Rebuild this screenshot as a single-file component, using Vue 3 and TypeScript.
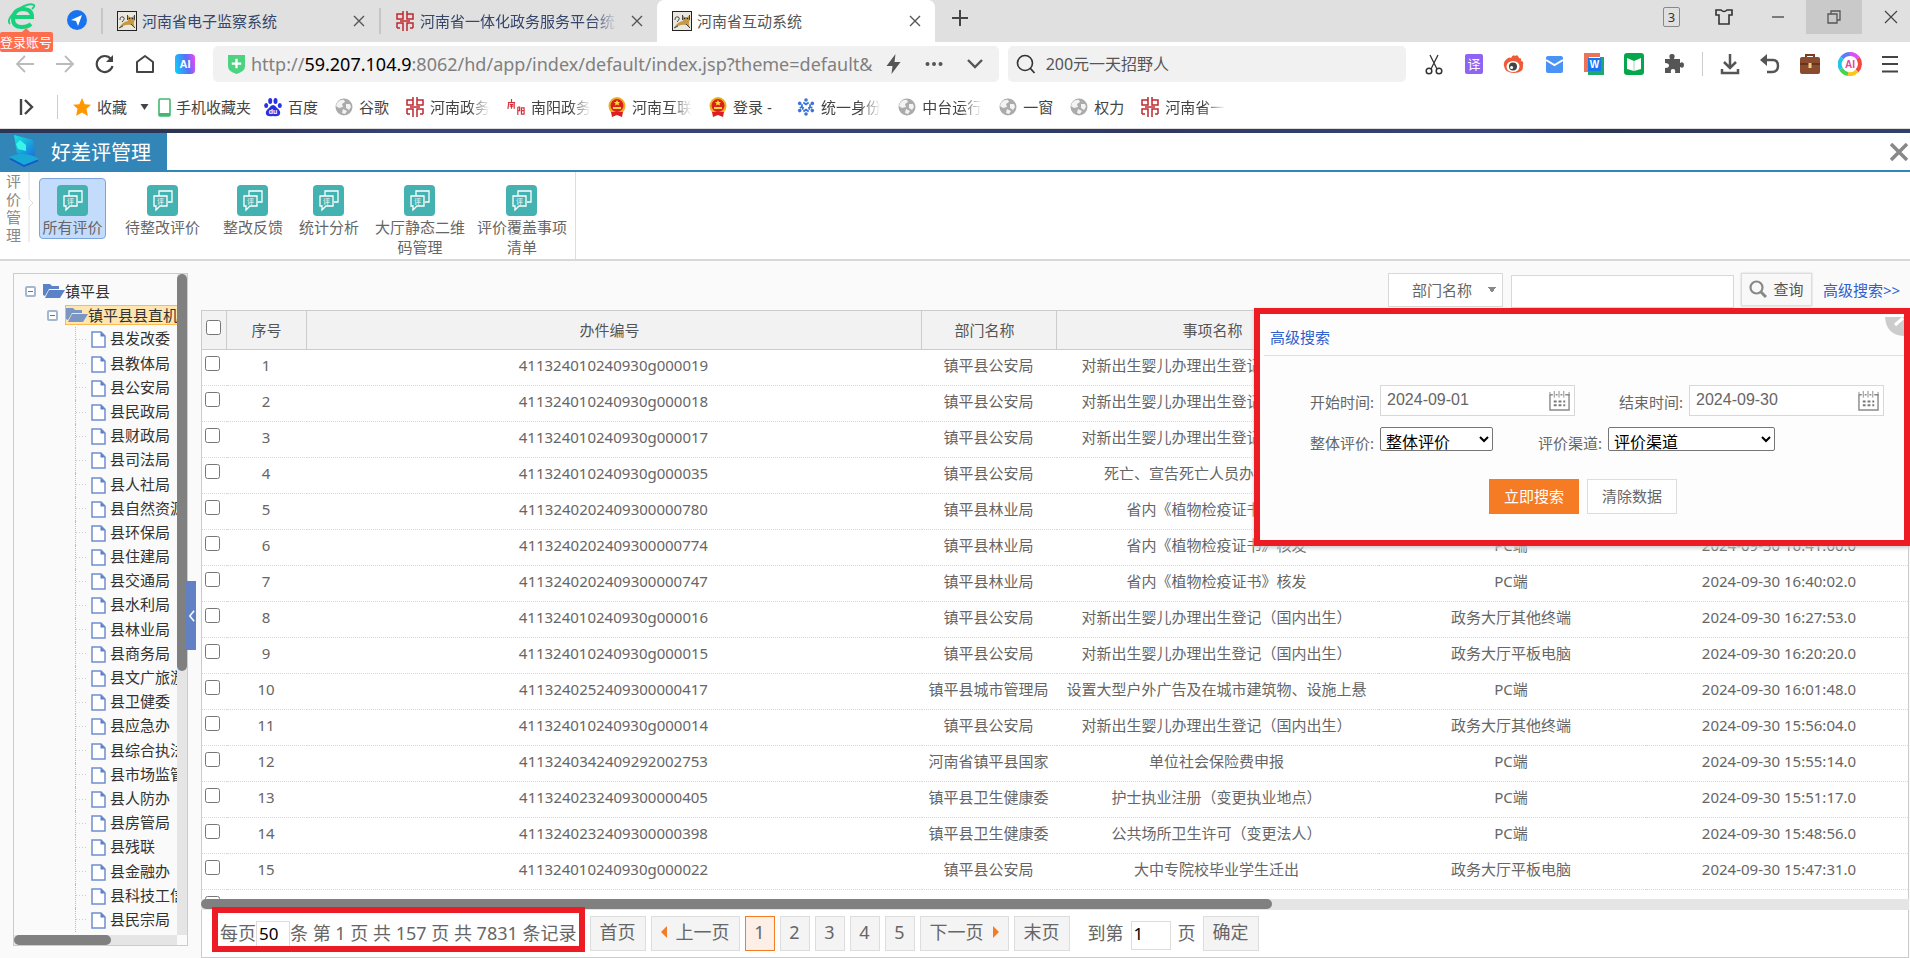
<script setup lang="ts">
import { ref } from 'vue'

interface Row {
  code: string
  dept: string
  item: string
  channel: string
  time: string
}

const bookmarks: { icon: string; label: string; fade?: boolean; wide?: boolean }[] = [
  { icon: 'baidu', label: '百度' },
  { icon: 'globe', label: '谷歌' },
  { icon: 'seal', label: '河南政务', fade: true },
  { icon: 'nanyang', label: '南阳政务', fade: true },
  { icon: 'emblem', label: '河南互联', fade: true },
  { icon: 'emblem', label: '登录 -', wide: true },
  { icon: 'flower', label: '统一身份', fade: true },
  { icon: 'globe', label: '中台运行', fade: true },
  { icon: 'globe', label: '一窗' },
  { icon: 'globe', label: '权力' },
  { icon: 'seal', label: '河南省一', fade: true },
]

const tools = ['scissors', 'translate', 'weibo', 'mail', 'word', 'book', 'puzzle']
const tools2 = ['download', 'undo', 'case', 'aiRing', 'menu']

const ribbon = [
  { lines: ['所有评价'] },
  { lines: ['待整改评价'] },
  { lines: ['整改反馈'] },
  { lines: ['统计分析'] },
  { lines: ['大厅静态二维', '码管理'] },
  { lines: ['评价覆盖事项', '清单'] },
]

const departments = [
  '县发改委', '县教体局', '县公安局', '县民政局', '县财政局', '县司法局', '县人社局',
  '县自然资源', '县环保局', '县住建局', '县交通局', '县水利局', '县林业局', '县商务局',
  '县文广旅游', '县卫健委', '县应急办', '县综合执法', '县市场监管', '县人防办', '县房管局',
  '县残联', '县金融办', '县科技工信', '县民宗局',
]

const birth = '对新出生婴儿办理出生登记（国内出生）'
const plant = '省内《植物检疫证书》核发'
const rows: Row[] = [
  { code: '411324010240930g000019', dept: '镇平县公安局', item: birth, channel: '', time: '' },
  { code: '411324010240930g000018', dept: '镇平县公安局', item: birth, channel: '', time: '' },
  { code: '411324010240930g000017', dept: '镇平县公安局', item: birth, channel: '', time: '' },
  { code: '411324010240930g000035', dept: '镇平县公安局', item: '死亡、宣告死亡人员办理户口注销', channel: '', time: '' },
  { code: '4113240202409300000780', dept: '镇平县林业局', item: plant, channel: '', time: '' },
  { code: '4113240202409300000774', dept: '镇平县林业局', item: plant, channel: 'PC端', time: '2024-09-30 16:41:00.0' },
  { code: '4113240202409300000747', dept: '镇平县林业局', item: plant, channel: 'PC端', time: '2024-09-30 16:40:02.0' },
  { code: '411324010240930g000016', dept: '镇平县公安局', item: birth, channel: '政务大厅其他终端', time: '2024-09-30 16:27:53.0' },
  { code: '411324010240930g000015', dept: '镇平县公安局', item: birth, channel: '政务大厅平板电脑', time: '2024-09-30 16:20:20.0' },
  { code: '4113240252409300000417', dept: '镇平县城市管理局', item: '设置大型户外广告及在城市建筑物、设施上悬', channel: 'PC端', time: '2024-09-30 16:01:48.0' },
  { code: '411324010240930g000014', dept: '镇平县公安局', item: birth, channel: '政务大厅其他终端', time: '2024-09-30 15:56:04.0' },
  { code: '4113240342409292002753', dept: '河南省镇平县国家', item: '单位社会保险费申报', channel: 'PC端', time: '2024-09-30 15:55:14.0' },
  { code: '4113240232409300000405', dept: '镇平县卫生健康委', item: '护士执业注册（变更执业地点）', channel: 'PC端', time: '2024-09-30 15:51:17.0' },
  { code: '4113240232409300000398', dept: '镇平县卫生健康委', item: '公共场所卫生许可（变更法人）', channel: 'PC端', time: '2024-09-30 15:48:56.0' },
  { code: '411324010240930g000022', dept: '镇平县公安局', item: '大中专院校毕业学生迁出', channel: '政务大厅平板电脑', time: '2024-09-30 15:47:31.0' },
]

const activeRibbon = ref(0)
const page = ref(1)
const pageSize = ref('50')
const gotoPage = ref('1')
const keyword = ref('')
const webSearch = ref('200元一天招野人')
const startDate = ref('2024-09-01')
const endDate = ref('2024-09-30')

function clearForm() {
  startDate.value = ''
  endDate.value = ''
}
</script>

<template>
  <svg class="defs" width="0" height="0" aria-hidden="true">
    <symbol id="i-x" viewBox="0 0 14 14"><path d="M2 2L12 12M12 2L2 12" stroke="currentColor" stroke-width="1.4" fill="none" /></symbol>
    <symbol id="i-tomcat" viewBox="0 0 20 20">
      <rect x="0.5" y="0.5" width="19" height="19" fill="#e9e7df" stroke="#222" />
      <path d="M2 17Q5 11 11 10L10.500 4L12.500 6H15.500L17.500 4V10Q16 12 18 17L14.500 14Q10 13 6 15Z" fill="#c49a45" />
      <path d="M2 17L6 15M10.500 4V9M17.500 4V9M14 13L18 17M3 9Q3 5 6 6T5 11" stroke="#444" fill="none" />
      <circle cx="12.500" cy="7.500" r="0.800" fill="#222" /><circle cx="15.500" cy="7.500" r="0.800" fill="#222" />
    </symbol>
    <symbol id="i-seal" viewBox="0 0 18 20">
      <path d="M7 0V8H1V3H7M11 0V8H17V3H11M1 17V12H7V20M17 17V12H11V20M1 17H4M17 17H14M4 10H14" stroke="#c0272d" stroke-width="1.500" fill="none" />
    </symbol>
    <symbol id="i-globe" viewBox="0 0 18 18">
      <circle cx="9" cy="9" r="8.5" fill="#ababab" />
      <path d="M2 5Q5 1 9 2L10 4L7 6L8 9L4 10L1 8ZM11 6L15 6L16 9L14 12L11 10ZM8 11L12 13L10 16L7 15Z" fill="#f3f3f3" />
    </symbol>
    <symbol id="i-baidu" viewBox="0 0 18 20">
      <g fill="#2932e1"><ellipse cx="6.2" cy="4" rx="2" ry="3" /><ellipse cx="11.5" cy="4" rx="2" ry="3" /><ellipse cx="2.2" cy="8.5" rx="2" ry="2.6" /><ellipse cx="15.8" cy="8.5" rx="2" ry="2.6" /><path d="M9 8Q11 8 13 11Q17 14 16 17Q15 20 9 19Q3 20 2 17Q1 14 5 11Q7 8 9 8Z" /></g>
      <text x="9" y="17" font-size="7" font-weight="700" fill="#fff" text-anchor="middle" font-family="Liberation Sans, sans-serif">du</text>
    </symbol>
    <symbol id="i-nanyang" viewBox="0 0 20 18">
      <path d="M5 0V4M1 4H9M2 4L1 11M8 4V11M3 6H7M3 8H7M5 6V11" stroke="#d6303a" stroke-width="1.300" fill="none" />
      <path d="M12 9V18M12 9H14V13H12M16 10H19V17H16ZM16 13H19" stroke="#d6303a" stroke-width="1.300" fill="none" />
    </symbol>
    <symbol id="i-emblem" viewBox="0 0 18 20">
      <ellipse cx="9" cy="9" rx="8.500" ry="9" fill="#ecae26" /><circle cx="9" cy="8.500" r="6.500" fill="#dc1f1c" />
      <path d="M9 3L10 5H12L10.500 6.500L11 8.500L9 7.400L7 8.500L7.500 6.500L6 5H8ZM5 10H13V12H5Z" fill="#ffd83c" />
      <path d="M3 15H15L14 20L9 18L4 20Z" fill="#dc1f1c" />
    </symbol>
    <symbol id="i-flower" viewBox="0 0 20 20">
      <g fill="#3b74d6"><circle cx="10" cy="2.200" r="2" /><circle cx="17" cy="6" r="2" /><circle cx="17" cy="14" r="2" /><circle cx="10" cy="17.800" r="2" /><circle cx="3" cy="14" r="2" /><circle cx="3" cy="6" r="2" /></g>
      <path d="M7 5L10 7L13 5M14.500 7V10L17 11M13 15L10 13L7 15M5.500 7V10L3 11M6 13L7 10M14 13L13 10" stroke="#3b74d6" stroke-width="2" fill="none" />
    </symbol>
    <symbol id="i-scissors" viewBox="0 0 24 24"><path d="M8 3L15 17M16 3L9 17" stroke="#333" stroke-width="1.300" /><circle cx="7" cy="19" r="2.800" fill="none" stroke="#333" stroke-width="1.500" /><circle cx="17" cy="19" r="2.800" fill="none" stroke="#333" stroke-width="1.500" /></symbol>
    <symbol id="i-translate" viewBox="0 0 24 24"><rect x="3" y="2" width="18" height="20" rx="2" fill="#8f63f4" /><text x="12" y="17" font-size="13" fill="#fff" text-anchor="middle" font-family="Noto Sans CJK SC, sans-serif">译</text></symbol>
    <symbol id="i-weibo" viewBox="0 0 24 24"><path d="M2 14Q1 9 6 6Q8 5 9 6Q11 2 13 4Q16 2 17 6Q20 6 19 9Q22 9 21 13Q22 21 12 21Q3 21 2 14Z" fill="#f15a38" /><ellipse cx="11" cy="14.500" rx="6.500" ry="5.500" fill="#fff" /><circle cx="11" cy="14.500" r="4" fill="#444" /><circle cx="9.600" cy="15.500" r="1.500" fill="#fff" /></symbol>
    <symbol id="i-mail" viewBox="0 0 24 24"><rect x="4" y="4" width="17" height="17" rx="2" fill="#4b92f5" /><path d="M4 8L12.500 13L21 8" stroke="#fff" stroke-width="2" fill="none" /></symbol>
    <symbol id="i-word" viewBox="0 0 24 24"><path d="M2 1H18V5H7V20H2Z" fill="#ee7355" /><path d="M18 5H22V23H6V19H18Z" fill="#1ea86a" /><rect x="6" y="6" width="13" height="13" fill="#1677f2" /><text x="12.500" y="16" font-size="10" font-weight="700" fill="#fff" text-anchor="middle" font-family="Liberation Sans, sans-serif">W</text></symbol>
    <symbol id="i-book" viewBox="0 0 24 24"><rect x="2" y="1" width="20" height="22" rx="3" fill="#06a64c" /><path d="M5 6L12 9L19 6V17L12 19L5 17Z" fill="#fff" /><path d="M12 9V19" stroke="#9ddab8" /></symbol>
    <symbol id="i-puzzle" viewBox="0 0 24 24"><path d="M3 7H8Q6 2 10 2Q14 2 12 7H18V11Q22 9 22 13Q22 17 18 15V21H13Q14 17 11 17Q8 17 9 21H3V16Q7 16 7 13.500Q7 11 3 11Z" fill="#555" /></symbol>
    <symbol id="i-download" viewBox="0 0 24 24"><path d="M12 2V16M6 10L12 16L18 10M4 17V21H20V17" stroke="#555" stroke-width="2.500" fill="none" /></symbol>
    <symbol id="i-undo" viewBox="0 0 24 24"><path d="M4 8H15Q20 8 20 14Q20 20 14 20H9" stroke="#555" stroke-width="2.400" fill="none" /><path d="M9 2V14L2 8Z" fill="#555" /></symbol>
    <symbol id="i-case" viewBox="0 0 24 24"><path d="M8 6V3H16V6" fill="none" stroke="#7a3d20" stroke-width="2" /><rect x="2" y="5" width="20" height="17" rx="2" fill="#8a4b2e" /><path d="M2 12H22" stroke="#5d2c16" stroke-width="1.500" /><rect x="10.500" y="11" width="3" height="5" fill="#f4cf7b" /></symbol>
    <symbol id="i-aiRing" viewBox="0 0 24 24">
      <g fill="none" stroke-width="4"><path d="M4 6A10 10 0 0 1 12 2" stroke="#5b7bfa" /><path d="M11 2A10 10 0 0 1 20 6" stroke="#d951f4" /><path d="M20 6A10 10 0 0 1 19 19" stroke="#f4483b" /><path d="M19 19A10 10 0 0 1 10 22" stroke="#ffc61a" /><path d="M10 22A10 10 0 0 1 3 17" stroke="#48d34c" /><path d="M3 17A10 10 0 0 1 4 6" stroke="#21c6ee" /></g>
      <text x="12" y="16" font-size="10" font-weight="700" fill="#e5449b" text-anchor="middle" font-family="Liberation Sans, sans-serif">AI</text>
    </symbol>
    <symbol id="i-menu" viewBox="0 0 24 24"><path d="M4 5H20M4 12H20M4 19.500H20" stroke="#444" stroke-width="2.200" /></symbol>
    <symbol id="i-folder" viewBox="0 0 22 16"><path d="M0 1H7L9 3H16V6H6L2 13L0 12Z" fill="#5b82c9" /><path d="M6 7H22L17 15H2Z" fill="#5b82c9" /></symbol>
    <symbol id="i-file" viewBox="0 0 15 17"><path d="M1 1H10L14 5V16H1Z" fill="#fff" stroke="#6d8fd0" stroke-width="1.500" /><path d="M9.500 1V5.500H14Z" fill="#5b7fc7" /></symbol>
    <symbol id="i-cal" viewBox="0 0 22 22"><path d="M1 5V21H21V5H17M1 5H4M7 5H9M12 5H14" fill="none" stroke="#8a8a8a" stroke-width="1.500" /><path d="M5.500 1V8M10.500 1V8M15.500 1V8M1 2V6M21 2V6" stroke="#8a8a8a" /><path d="M5 12H17M5 16H17" stroke="#777" stroke-width="2" stroke-dasharray="3 2" /></symbol>
    <symbol id="i-review" viewBox="0 0 31 31">
      <rect width="31" height="31" rx="4" fill="#45b2b2" />
      <path d="M12 11V6H25V17H21" fill="none" stroke="#fff" stroke-width="1.300" />
      <path d="M7 11H20V21H13L9 25V21H7Z" fill="#45b2b2" stroke="#fff" stroke-width="1.300" />
      <text x="13.500" y="19" font-size="7" fill="#fff" text-anchor="middle" font-family="Noto Sans CJK SC, sans-serif">评</text>
    </symbol>
  </svg>

  <div class="window">
    <header class="tabs">
      <div class="account">
        <svg class="logo" viewBox="0 0 28 28"><path d="M4 14H24Q24 6 15 6Q6 6 5 16Q5 24 14 24Q20 24 23 21" fill="none" stroke="#17d27c" stroke-width="4" /><path d="M2 21Q-2 17 8 8Q20 -1 26 2Q27 3 24 6" fill="none" stroke="#17d27c" stroke-width="1.800" /></svg>
        <span class="login">登录账号</span>
      </div>
      <svg class="compass" viewBox="0 0 20 20"><circle cx="10" cy="10" r="10" fill="#1a73ee" /><path d="M15 5L4 10L9 11L11 16Z" fill="#fff" /></svg>
      <div class="tab t1"><svg class="fav"><use href="#i-tomcat" /></svg><span class="tabname">河南省电子监察系统</span><button class="tabx" aria-label="关闭"><svg><use href="#i-x" /></svg></button></div>
      <div class="tab t2"><svg class="fav"><use href="#i-seal" /></svg><span class="tabname tail">河南省一体化政务服务平台统一</span><button class="tabx" aria-label="关闭"><svg><use href="#i-x" /></svg></button></div>
      <div class="tab on"><svg class="fav"><use href="#i-tomcat" /></svg><span class="tabname">河南省互动系统</span><button class="tabx" aria-label="关闭"><svg><use href="#i-x" /></svg></button></div>
      <button class="plus" aria-label="新标签"><svg viewBox="0 0 16 16"><path d="M8 0V16M0 8H16" stroke="#444" stroke-width="2" /></svg></button>
      <div class="wincontrols">
        <span class="count">3</span>
        <button class="wbtn skin" aria-label="皮肤"><svg viewBox="0 0 20 18"><path d="M2 2H7Q10 5 13 2H18V7H15V16H5V7H2Z" fill="none" stroke="#333" stroke-width="1.600" /></svg></button>
        <button class="wbtn" aria-label="最小化"><svg viewBox="0 0 20 18"><path d="M4 9H16" stroke="#444" stroke-width="1.300" /></svg></button>
        <button class="wbtn restore" aria-label="还原"><svg viewBox="0 0 20 18"><path d="M4 6H13V15H4ZM7 6V3H16V12H13" fill="none" stroke="#555" stroke-width="1.300" /></svg></button>
        <button class="wbtn last" aria-label="关闭"><svg viewBox="0 0 20 18"><path d="M4 3L16 15M16 3L4 15" stroke="#444" stroke-width="1.200" /></svg></button>
      </div>
    </header>

    <div class="address">
      <div class="nav">
        <button aria-label="后退"><svg viewBox="0 0 20 20"><path d="M19 10H2M10 2L2 10L10 18" fill="none" stroke="#bbb" stroke-width="1.800" /></svg></button>
        <button aria-label="前进"><svg viewBox="0 0 20 20"><path d="M1 10H18M10 2L18 10L10 18" fill="none" stroke="#bbb" stroke-width="1.800" /></svg></button>
        <button aria-label="刷新"><svg viewBox="0 0 20 20"><path d="M16 5A8 8 0 1 0 17.500 12" fill="none" stroke="#444" stroke-width="2.200" /><path d="M18 1V8H11Z" fill="#444" /></svg></button>
        <button aria-label="主页"><svg viewBox="0 0 20 20"><path d="M2 18V8L10 2L18 8V18Z" fill="none" stroke="#444" stroke-width="2" stroke-linejoin="round" /></svg></button>
        <button aria-label="AI"><svg viewBox="0 0 20 20"><defs><linearGradient id="ai" x1="0" y1="0.500" x2="1" y2="0.300"><stop offset="0" stop-color="#12c8f8" /><stop offset="0.600" stop-color="#596dfb" /><stop offset="1" stop-color="#e44af0" /></linearGradient></defs><rect width="20" height="20" rx="4" fill="url(#ai)" /><text x="10" y="14" font-size="11" font-weight="700" fill="#fff" text-anchor="middle" font-family="Liberation Sans, sans-serif">AI</text></svg></button>
      </div>
      <div class="urlbox">
        <svg class="shield" viewBox="0 0 18 20"><path d="M0 0H18V12Q18 17 9 20Q0 17 0 12Z" fill="#4cd281" /><path d="M9 4V14M4 9H14" stroke="#fff" stroke-width="2.400" /></svg>
        <span class="url">http://<b>59.207.104.9</b>:8062/hd/app/index/default/index.jsp?theme=default&amp;</span>
        <svg class="bolt" viewBox="0 0 14 20"><path d="M9 0L0 12H6L5 20L14 8H8Z" fill="#555" /></svg>
        <svg class="dots" viewBox="0 0 18 6"><circle cx="2.500" cy="3" r="2" fill="#555" /><circle cx="9" cy="3" r="2" fill="#555" /><circle cx="15.500" cy="3" r="2" fill="#555" /></svg>
        <svg class="down" viewBox="0 0 16 10"><path d="M1 1L8 8L15 1" stroke="#555" stroke-width="2.400" fill="none" /></svg>
      </div>
      <div class="searchbox">
        <svg viewBox="0 0 20 20"><circle cx="9" cy="9" r="7.500" fill="none" stroke="#333" stroke-width="1.600" /><path d="M14 14L18.500 19" stroke="#333" stroke-width="1.800" /></svg>
        <input v-model="webSearch" aria-label="搜索" />
      </div>
      <div class="tools">
        <button v-for="t in tools" :key="t" :aria-label="t"><svg><use :href="'#i-' + t" /></svg></button>
        <span class="vline"></span>
        <button v-for="t in tools2" :key="t" :aria-label="t"><svg><use :href="'#i-' + t" /></svg></button>
      </div>
    </div>

    <nav class="bookmarks">
      <svg class="side" viewBox="0 0 16 16"><path d="M2 0V16M6 1L13 8L6 15" fill="none" stroke="#444" stroke-width="2.400" /></svg>
      <span class="vline"></span>
      <a class="mark favs" href="#"><svg viewBox="0 0 20 20"><path d="M10 0L13 7L20 7.500L15 12L16.500 20L10 16L3.500 20L5 12L0 7.500L7 7Z" fill="#ff9700" /></svg>收藏</a>
      <svg class="caret" viewBox="0 0 8 6"><path d="M0 0H8L4 6Z" fill="#444" /></svg>
      <a class="mark phone" href="#"><svg viewBox="0 0 13 19"><rect x="1" y="1" width="11" height="17" rx="1" fill="#fff" stroke="#41b870" stroke-width="1.600" /><path d="M1 15H12V18H1Z" fill="#41b870" /></svg>手机收藏夹</a>
      <a v-for="(b, i) in bookmarks" :key="i" class="mark" href="#"><svg><use :href="'#i-' + b.icon" /></svg><span :class="{ fade: b.fade, wide: b.wide }">{{ b.label }}</span></a>
    </nav>

    <div class="stripe"></div>

    <div class="module">
      <div class="modtab">
        <svg viewBox="0 0 34 34"><defs><linearGradient id="scr" x1="0" y1="0" x2="1" y2="1"><stop offset="0" stop-color="#15e8dc" /><stop offset="1" stop-color="#1a6fe0" /></linearGradient></defs><path d="M2 25L18 20L32 27L17 33Z" fill="#1558c9" /><path d="M2 23L18 18L32 25L17 31Z" fill="#18a9d6" /><path d="M7 1L26 6L28 22L10 19Z" fill="url(#scr)" /><path d="M9 10L13 6L19 11V17L11 15Z" fill="#39f4e7" /></svg>
        <span>好差评管理</span>
      </div>
      <button class="modclose" aria-label="关闭"><svg viewBox="0 0 20 18"><path d="M2 1L18 17M18 1L2 17" stroke="#888" stroke-width="3.500" /></svg></button>
    </div>

    <div class="ribbon">
      <div class="group">评价管理</div>
      <svg class="divider" viewBox="0 0 8 70"><path d="M2 0V27L6 31L2 35V70" fill="none" stroke="#ddd" /></svg>
      <div class="items">
        <button v-for="(r, i) in ribbon" :key="i" :class="['item', { active: activeRibbon === i }]" @click="activeRibbon = i">
          <svg><use href="#i-review" /></svg>
          <span v-for="l in r.lines" :key="l">{{ l }}</span>
        </button>
      </div>
    </div>

    <main class="main">
      <aside class="tree">
        <div class="view">
          <ul>
            <li class="root"><span class="exp"></span><svg class="folder"><use href="#i-folder" /></svg>镇平县</li>
            <li class="sub"><span class="exp"></span><span class="picked"><svg class="folder"><use href="#i-folder" /></svg>镇平县县直机关</span></li>
            <li v-for="d in departments" :key="d" class="leaf"><span class="twig"></span><svg class="file"><use href="#i-file" /></svg>{{ d }}</li>
          </ul>
          <div class="vbar"><span></span></div>
        </div>
        <div class="hbar"><span></span></div>
        <button class="fold" aria-label="收起"><svg viewBox="0 0 8 14"><path d="M7 1L2 7L7 13" fill="none" stroke="#fff" stroke-width="1.800" /></svg></button>
      </aside>

      <section class="data">
        <div class="query">
          <select class="field" aria-label="查询字段"><option>部门名称</option></select>
          <input v-model="keyword" class="kw" aria-label="关键字" />
          <button class="go"><svg viewBox="0 0 18 18"><circle cx="7.500" cy="7.500" r="6" fill="none" stroke="#888" stroke-width="2.200" /><path d="M12 12L17 17" stroke="#888" stroke-width="3" /></svg>查询</button>
          <a href="#" class="adv">高级搜索&gt;&gt;</a>
        </div>

        <div class="grid">
          <table>
            <colgroup><col class="c0" /><col class="c1" /><col /><col class="c3" /><col class="c4" /><col class="c5" /><col class="c5" /></colgroup>
            <thead>
              <tr><th><input type="checkbox" aria-label="全选" /></th><th>序号</th><th>办件编号</th><th>部门名称</th><th>事项名称</th><th></th><th></th></tr>
            </thead>
            <tbody>
              <tr v-for="(r, i) in rows" :key="r.code">
                <td><input type="checkbox" :aria-label="'选择' + (i + 1)" /></td>
                <td>{{ i + 1 }}</td><td>{{ r.code }}</td><td>{{ r.dept }}</td><td>{{ r.item }}</td><td>{{ r.channel }}</td><td>{{ r.time }}</td>
              </tr>
              <tr><td><input type="checkbox" aria-label="选择" /></td><td></td><td></td><td></td><td></td><td></td><td></td></tr>
            </tbody>
          </table>
        </div>
        <div class="gridbar"><span></span></div>

        <div class="pager">
          <div class="summary"><label for="size">每页</label><input id="size" v-model="pageSize" /><span>条 第 1 页 共 157 页 共 7831 条记录</span></div>
          <button>首页</button>
          <button><svg viewBox="0 0 6 12"><path d="M6 0V12L0 6Z" fill="#f67b25" /></svg>上一页</button>
          <button v-for="n in 5" :key="n" :class="['num', { cur: page === n }]" @click="page = n">{{ n }}</button>
          <button>下一页<svg viewBox="0 0 6 12"><path d="M0 0V12L6 6Z" fill="#f67b25" /></svg></button>
          <button>末页</button>
          <div class="jump"><label for="goto">到第</label><input id="goto" v-model="gotoPage" /><span>页</span></div>
          <button>确定</button>
        </div>

        <form class="advanced" @submit.prevent>
          <svg class="corner" viewBox="0 0 19 19"><path d="M0 0Q1 18 19 19V0Z" fill="#ccc" /><path d="M10 8L18 1" stroke="#fff" stroke-width="3" /></svg>
          <h2>高级搜索</h2>
          <div class="line dates">
            <div class="pair"><label for="from">开始时间:</label><div class="date"><input id="from" v-model="startDate" /><svg><use href="#i-cal" /></svg></div></div>
            <div class="pair"><label for="to">结束时间:</label><div class="date"><input id="to" v-model="endDate" /><svg><use href="#i-cal" /></svg></div></div>
          </div>
          <div class="line picks">
            <div class="pair"><label for="overall">整体评价:</label><select id="overall" class="s1"><option>整体评价</option></select></div>
            <div class="pair"><label for="chan">评价渠道:</label><select id="chan" class="s2"><option>评价渠道</option></select></div>
          </div>
          <div class="actions"><button class="submit">立即搜索</button><button type="button" @click="clearForm">清除数据</button></div>
        </form>
      </section>
    </main>
  </div>
</template>

<style>
body { margin: 0; background: #fff; overflow: hidden; }
</style>

<style scoped>
.window, .window button, .window input, .window select { font-family: "Noto Sans", "Noto Sans CJK SC", sans-serif; }
.window { display: flex; flex-direction: column; height: 100vh; font-size: 15px; color: #666; overflow: hidden; }
.window * { box-sizing: border-box; }
.defs { display: none; }
button { border: 0; padding: 0; background: none; font-size: 15px; color: inherit; }
a { text-decoration: none; color: inherit; }
.vline { width: 1px; height: 24px; background: #ccc; }
.fade { -webkit-mask-image: linear-gradient(90deg, #000 65%, transparent); mask-image: linear-gradient(90deg, #000 65%, transparent); }
.tail { -webkit-mask-image: linear-gradient(90deg, #000 88%, transparent); mask-image: linear-gradient(90deg, #000 88%, transparent); }

.tabs { display: flex; flex: none; height: 42px; background: #e0e0e0; }
.account { position: relative; width: 67px; }
.logo { width: 28px; height: 28px; margin: 3px 0 0 8px; }
.login { position: absolute; left: 0; top: 32px; z-index: 2; padding: 0 1px 0 0; background: #ff6e4c; color: #fff; font-size: 13px; line-height: 20px; white-space: nowrap; border-radius: 2px; }
.login::before { content: ""; position: absolute; left: 22px; top: -4px; border: 4px solid transparent; border-top: 0; border-bottom-color: #ff6e4c; }
.compass { width: 20px; height: 20px; margin-top: 10px; }
.tab { display: flex; align-items: center; height: 42px; padding-left: 15px; color: #35456b; }
.t1 { width: 278px; margin-left: 14px; }
.t2 { width: 278px; }
.t1::before, .t2::before { content: ""; width: 2px; height: 26px; margin-left: -15px; margin-right: 14px; background: #c6c6c6; }
.on { width: 278px; background: #fff; border-radius: 7px 7px 0 0; color: #555; }
.fav { width: 20px; height: 20px; margin-right: 5px; flex: none; }
.tabname { flex: 1; white-space: nowrap; overflow: hidden; line-height: 22px; }
.tabx { width: 14px; height: 14px; margin: 0 13px; flex: none; color: #555; }
.tabx svg { display: block; width: 14px; height: 14px; }
.plus { width: 16px; margin-left: 17px; margin-bottom: 2px; }
.plus svg { width: 16px; height: 16px; }
.wincontrols { display: flex; margin-left: auto; height: 34px; align-items: center; }
.count { width: 17px; height: 20px; margin-right: 18px; border: 1px solid #888; border-radius: 2px; font-size: 13px; line-height: 18px; text-align: center; color: #333; }
.wbtn { display: grid; place-items: center; width: 56px; height: 34px; }
.wbtn svg { width: 20px; height: 18px; }
.wbtn.skin { width: 52px; }
.restore { background: #c9c9c9; }
.wbtn.last { width: 48px; padding-left: 10px; }

.address { display: flex; flex: none; align-items: center; height: 44px; }
.nav { display: flex; gap: 20px; width: 213px; padding-left: 15px; }
.nav button, .nav svg { display: block; width: 20px; height: 20px; }
.urlbox { display: flex; align-items: center; flex: 754 1 0; height: 36px; margin-right: 9px; padding: 0 16px 0 15px; background: #f1f1f1; border-radius: 5px; }
.shield { width: 17px; height: 19px; margin-right: 6px; flex: none; }
.url { flex: 1; font-size: 18px; line-height: 26px; color: #808080; white-space: nowrap; overflow: hidden; }
.url b { font-weight: 400; color: #000; }
.bolt { width: 15px; height: 20px; margin-left: 12px; }
.dots { width: 18px; height: 6px; margin: 0 24px; }
.down { width: 16px; height: 10px; }
.searchbox { display: flex; align-items: center; flex: 390 1 0; height: 36px; padding-left: 8px; background: #f1f1f1; border-radius: 5px; }
.searchbox svg { width: 20px; height: 20px; flex: none; }
.searchbox input { flex: 1; min-width: 0; margin-left: 8px; padding: 1px 2px 3px; border: 0; background: none; font-size: 16px; color: #555; }
.tools { display: flex; align-items: center; gap: 16px; padding: 0 8px 0 16px; }
.tools button, .tools svg { display: block; width: 24px; height: 24px; }
.tools .vline { margin-right: -1px; }

.bookmarks { display: flex; flex: none; align-items: center; height: 43px; padding-left: 19px; border-bottom: 1px solid #ddd; color: #444; white-space: nowrap; overflow: hidden; }
.side { width: 16px; height: 16px; margin-right: 22px; }
.mark { display: flex; align-items: center; margin-left: 17px; line-height: 22px; }
.mark svg { width: 18px; height: 20px; margin-right: 6px; }
.mark.favs { margin-left: 15px; }
.mark.phone { margin-left: 9px; margin-right: -4px; }
.mark.phone svg { width: 13px; height: 19px; margin-right: 5px; }
.mark .wide { min-width: 47px; }
.caret { width: 9px; height: 6px; margin-left: 13px; }

.stripe { flex: none; height: 4px; background: linear-gradient(90deg, #2d3557 0 12%, #38437a 22% 42%, #2f3960 60%, #38437a 78%, #2d3557 84%, #343f6c); }
.module { display: flex; flex: none; height: 39px; justify-content: space-between; background: #fff; border-bottom: 2px solid #3286b7; }
.modtab { display: flex; align-items: center; width: 167px; height: 39px; padding-left: 7px; background: #3286b7; color: #fff; font-size: 20px; }
.modtab svg { width: 34px; height: 34px; margin-right: 10px; margin-bottom: 4px; }
.modtab span { line-height: 30px; }
.modclose { width: 20px; margin-right: 1px; }
.modclose svg { display: block; width: 20px; height: 18px; }

.ribbon { display: flex; flex: none; height: 89px; background: #fff; border-bottom: 2px solid #d8d8d8; }
.group { width: 15px; margin: 0 6px 0 6px; line-height: 18px; color: #888; }
.divider { width: 8px; height: 70px; margin-right: 4px; }
.items { display: grid; grid-template-columns: 67px 113px 68px 84px 98px 106px; justify-items: center; align-items: start; border-right: 1px solid #ddd; }
.item { display: flex; flex-direction: column; align-items: center; margin-top: 6px; padding: 6px 2px 1px; border: 1px solid transparent; border-radius: 4px; line-height: 20px; color: #666; white-space: nowrap; }
.item.active { background: #c4dcfb; border-color: #7ba5dc; }
.item svg { width: 31px; height: 31px; margin-bottom: 1px; }

.main { display: flex; flex: 1; min-height: 0; padding-left: 13px; background: #fafafa; }
.tree { position: relative; display: flex; flex-direction: column; flex: none; width: 175px; margin: 12px 13px 12px 0; border: 1px solid #ccc; }
.view { display: flex; flex: 1; min-height: 0; }
ul { display: flex; flex-direction: column; flex: 1; min-width: 0; margin: 0; padding: 5px 0 3px; list-style: none; overflow: hidden; color: #333; }
li { display: flex; align-items: center; flex: 1; min-height: 0; white-space: nowrap; line-height: 20px; }
.exp { width: 11px; height: 11px; border: 2px solid #a3b7cf; border-radius: 2px; background: linear-gradient(#4c78b8, #4c78b8) center / 5px 1px no-repeat #fff; flex: none; }
.root { padding-left: 11px; }
.root .folder { margin-left: 7px; }
.sub { padding-left: 33px; }
.picked { display: flex; align-items: center; height: 20px; margin-left: 7px; background: #ffe6b0; border: 1px solid #ffb951; color: #333; }
.picked .folder { opacity: 0.8; }
.folder { width: 22px; height: 16px; flex: none; }
.leaf { align-items: stretch; padding-left: 61px; line-height: 22px; }
.twig { width: 11px; flex: none; border-left: 1px dotted #bbb; background: repeating-linear-gradient(90deg, #ccc 0 1px, transparent 1px 3px) 0 50% / 100% 1px no-repeat; }
.file { width: 15px; height: 17px; margin: 4px 4px 0 5px; flex: none; }
.vbar { width: 10px; background: #e5e5e5; }
.vbar span { display: block; height: 60%; border-radius: 5px; background: #808080; }
.hbar { height: 10px; margin-right: 10px; background: #e5e5e5; }
.hbar span { display: block; width: 97px; height: 10px; border-radius: 5px; background: #808080; }
.fold { position: absolute; right: -9px; top: 307px; display: grid; place-items: center; width: 10px; height: 69px; background: #6181c4; }
.fold svg { width: 7px; height: 12px; }

.data { position: relative; display: flex; flex-direction: column; flex: 1; min-width: 0; }
.query { display: flex; flex: none; justify-content: flex-end; align-items: flex-start; height: 49px; padding: 12px 6px 0 0; }
.field { appearance: none; width: 115px; height: 34px; margin-right: 8px; padding: 0 0 0 23px; border: 1px solid #d8d8d8; border-radius: 0; font-size: 15px; color: #666; background: linear-gradient(to bottom right, #888 50%, transparent 50%) 103px 13px / 4px 6px no-repeat, linear-gradient(to bottom left, #888 50%, transparent 50%) 99px 13px / 4px 6px no-repeat, #fff; }
.kw { width: 223px; height: 33px; margin: 2px 7px 0 0; border: 1px solid #d8d8d8; }
.go { display: flex; align-items: center; justify-content: center; gap: 6px; width: 71px; height: 33px; margin-right: 11px; padding-bottom: 2px; border: 1px solid #ddd; background: #f8f8f8; box-shadow: 0 0 2px #ccc; color: #555; }
.go svg { width: 18px; height: 18px; }
.adv { width: 81px; line-height: 34px; color: #2d60ce; }

.grid { flex: 1; min-height: 0; overflow: hidden; background: #fff; border: 1px solid #ccc; border-width: 1px 1px 0; margin-right: 1px; }
table { width: calc(100% + 6px); table-layout: fixed; border-collapse: separate; border-spacing: 0; }
.c0 { width: 25px; }
.c1 { width: 80px; }
.c3 { width: 135px; }
.c4 { width: 321px; }
.c5 { width: 268px; }
th { height: 39px; padding: 0 9px 2px 0; background: #f2f2f2; border-right: 1px solid #ccc; border-bottom: 1px solid #ccc; font-weight: 400; font-size: 15px; color: #555; }
th:nth-child(2) { padding: 0 0 2px; }
th:first-child { padding: 0 0 0 4px; text-align: left; vertical-align: top; }
th input { width: 15px; height: 15px; margin: 9px 0 0; }
td { height: 36px; padding: 0 2px 5px 0; border-bottom: 1px dotted #d8d8d8; text-align: center; line-height: 22px; white-space: nowrap; overflow: hidden; }
td:first-child { padding: 0 0 0 3px; text-align: left; vertical-align: top; line-height: 0; }
td input { width: 15px; height: 15px; margin: 6px 0 0; }
.gridbar { flex: none; height: 11px; background: #e5e5e5; margin-right: 1px; }
.gridbar span { display: block; width: 62.700%; height: 10px; border-radius: 5px; background: #808080; }

.pager { display: flex; flex: none; align-items: flex-start; gap: 5px; height: 48px; padding: 6px 0 0 18px; margin-right: 1px; background: #fff; border: 1px solid #ccc; border-top: 0; font-size: 18px; white-space: nowrap; }
.pager button { display: flex; align-items: center; gap: 9px; height: 35px; padding: 0 9px 3px; border: 1px solid #ddd; background: #f4f4f4; font-size: 18px; line-height: 24px; }
.pager .num { justify-content: center; width: 30px; padding: 0 0 3px; }
.pager .cur { background: #fdeee6; border-color: #f67b25; }
.pager svg { width: 6px; height: 12px; }
.summary { position: relative; display: flex; align-items: center; height: 35px; margin-right: 8px; }
.summary::after { content: ""; position: absolute; inset: -9px -8px -1px -8px; border: 6px solid #ed1c24; pointer-events: none; }
.summary label, .summary > span, .jump label, .jump span { padding-bottom: 3px; }
.pager input { width: 34px; height: 29px; margin-top: 3px; padding: 0 2px 3px; border: 1px solid #ddd; font-size: 17px; color: #000; }
.jump { display: flex; align-items: center; height: 35px; margin: 0 2px 0 13px; }
.pager .jump input { width: 40px; margin: 3px 7px 0; }

.advanced { position: absolute; right: 0; top: 47px; width: 656px; height: 238px; border: 6px solid #ed1c24; background: #fdfdfd; box-shadow: 0 2px 4px #ccc; padding-left: 4px; }
.corner { position: absolute; right: 0; top: 3px; width: 19px; height: 19px; }
h2 { margin: 0; height: 42px; padding: 2px 0 0 6px; border-bottom: 1px solid #ddd; font-size: 15px; font-weight: 400; line-height: 42px; color: #2d60ce; }
.line { display: flex; padding-left: 46px; }
.pair { display: flex; gap: 6px; }
.pair label { line-height: 34px; }
.dates { margin-top: 29px; gap: 44px; }
.date { display: flex; align-items: center; width: 195px; height: 31px; padding-right: 4px; background: #fff; border: 1px solid #d8d8d8; }
.date input { flex: 1; min-width: 0; border: 0; padding: 0 0 2px 6px; font-family: "Liberation Sans", Arial, sans-serif; font-size: 16px; color: #666; background: none; }
.date svg { width: 21px; height: 21px; }
.picks { height: 40px; margin-top: 5px; gap: 45px; }
.picks label { padding-top: 2px; }
.picks .pair { align-items: flex-start; }
.picks select { height: 24px; margin-top: 3px; padding: 0 0 0 1px; border: 1px solid #767676; border-radius: 2px; font-family: "Noto Sans CJK SC", sans-serif; font-size: 16px; color: #000; background: #fff; }
.s1 { width: 113px; }
.s2 { width: 167px; }
.actions { display: flex; gap: 8px; margin: 15px 0 0 225px; }
.actions button { width: 90px; height: 35px; padding-bottom: 2px; border: 1px solid #ddd; background: #fff; }
.actions .submit { border-color: #f67b25; background: #f67b25; color: #fff; }
</style>
